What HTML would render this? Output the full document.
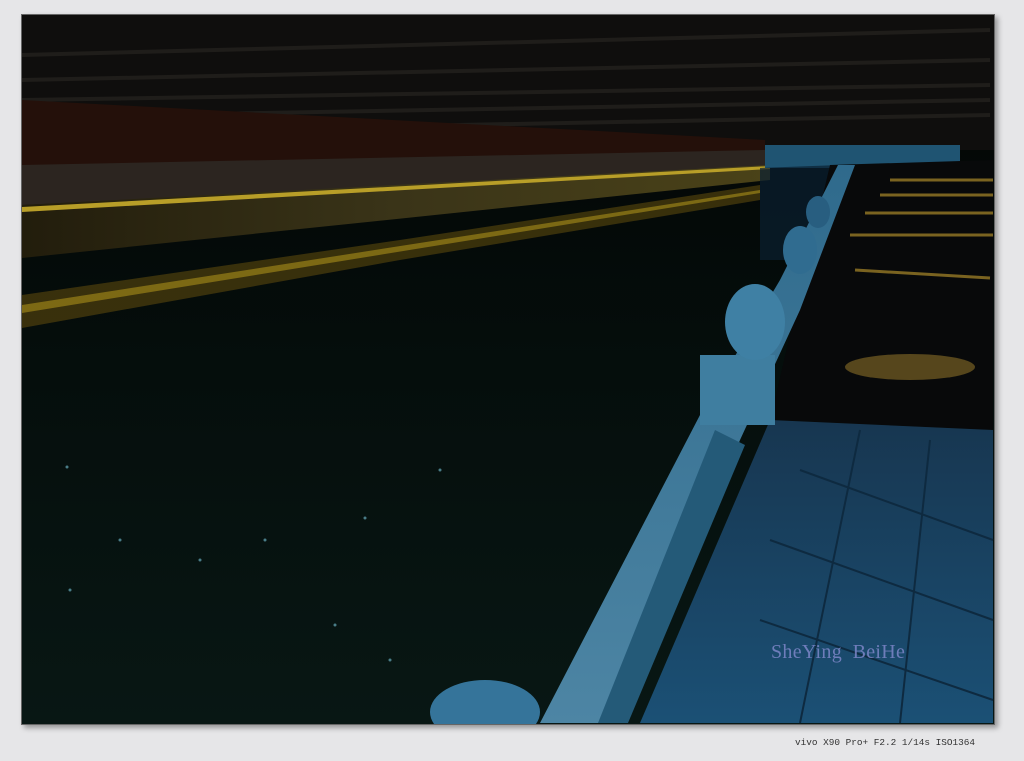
<!DOCTYPE html>
<html><head><meta charset="utf-8"><style>
html,body{margin:0;padding:0;width:1024px;height:761px;overflow:hidden;background:#e6e6e8}
.photo{position:absolute;left:21px;top:14px;width:972px;height:709px;border:1px solid #666;box-shadow:3px 3px 5px rgba(0,0,0,.35)}
.cap{position:absolute;left:795px;top:737px;font:9.4px "Liberation Mono",monospace;color:#333}
.wm{position:absolute;left:771px;top:641px;font:20px "Liberation Serif",serif;color:#7d86c8;opacity:.85;letter-spacing:.3px}
</style></head><body>
<div class="photo"><svg width="972" height="709" viewBox="22 15 972 709">
<defs>
<linearGradient id="w" x1="0" y1="0" x2="0" y2="1"><stop offset="0" stop-color="#030403"/><stop offset=".5" stop-color="#050e0c"/><stop offset="1" stop-color="#081714"/></linearGradient>
<linearGradient id="g" x1="0" y1="0" x2="1" y2="0"><stop offset="0" stop-color="#221d0c"/><stop offset=".5" stop-color="#3a3418"/><stop offset="1" stop-color="#4a4218"/></linearGradient>
<linearGradient id="bw" x1="0" y1="0" x2="0" y2="1"><stop offset="0" stop-color="#173650"/><stop offset="1" stop-color="#1b5075"/></linearGradient>
<linearGradient id="rl" x1="0" y1="0" x2="0" y2="1"><stop offset="0" stop-color="#2f6a8c"/><stop offset="1" stop-color="#4d85a4"/></linearGradient>
</defs>
<rect x="22" y="15" width="972" height="709" fill="url(#w)"/>
<rect x="22" y="15" width="972" height="135" fill="#0f0e0d"/>
<g stroke="#1f1d1a" stroke-width="4" fill="none">
<path d="M22 55 L990 30"/><path d="M22 80 L990 60"/><path d="M22 100 L990 85"/><path d="M150 115 L990 100"/><path d="M300 128 L990 115"/></g>
<polygon points="22,100 765,140 765,170 22,205" fill="#24100a"/>
<polygon points="22,165 765,150 765,170 22,205" fill="#2c2520"/>
<polygon points="22,205 770,165 770,180 22,258" fill="url(#g)"/>
<polygon points="22,207 770,166 770,169 22,212" fill="#b89e28"/>
<polygon points="22,295 400,240 760,185 760,200 400,260 22,328" fill="#46390c" opacity=".8"/>
<polygon points="22,305 760,190 760,193 22,313" fill="#9a8218" opacity=".7"/>
<polygon points="765,145 960,145 960,168 765,168" fill="#1f5472"/>
<polygon points="760,168 840,165 800,260 760,260" fill="#0a2030" opacity=".7"/>
<polygon points="830,165 993,160 993,430 770,420" fill="#08090a"/>
<polygon points="770,420 993,430 993,723 640,723" fill="url(#bw)"/>
<g stroke="#7a6320" stroke-width="3"><path d="M890 180 L993 180"/><path d="M880 195 L993 195"/><path d="M865 213 L993 213"/><path d="M850 235 L993 235"/><path d="M855 270 L990 278"/></g>
<ellipse cx="910" cy="367" rx="65" ry="13" fill="#6a5620" opacity=".8"/>
<g stroke="#0e2a40" stroke-width="2"><path d="M760 620 L993 700"/><path d="M800 470 L993 540"/><path d="M770 540 L993 620"/><path d="M860 430 L800 723"/><path d="M930 440 L900 723"/></g>
<polygon points="540,723 620,723 740,440 800,310 855,165 838,165 780,280 700,415" fill="url(#rl)"/>
<polygon points="598,723 628,723 745,445 715,430" fill="#245a78"/>
<rect x="700" y="355" width="75" height="70" fill="#3f7ea0"/>
<ellipse cx="755" cy="322" rx="30" ry="38" fill="#3f80a4"/>
<ellipse cx="800" cy="250" rx="17" ry="24" fill="#306c90"/>
<ellipse cx="818" cy="212" rx="12" ry="16" fill="#285e80"/>
<ellipse cx="485" cy="712" rx="55" ry="32" fill="#35749a"/>
<g fill="#6ab" opacity=".7"><circle cx="67" cy="467" r="1.5"/><circle cx="120" cy="540" r="1.5"/><circle cx="265" cy="540" r="1.5"/><circle cx="335" cy="625" r="1.5"/><circle cx="200" cy="560" r="1.5"/><circle cx="440" cy="470" r="1.5"/><circle cx="365" cy="518" r="1.5"/><circle cx="70" cy="590" r="1.5"/><circle cx="390" cy="660" r="1.5"/></g>
</svg></div>
<div class="wm">SheYing&nbsp; BeiHe</div>
<div class="cap">vivo X90 Pro+ F2.2 1/14s ISO1364</div>
</body></html>
